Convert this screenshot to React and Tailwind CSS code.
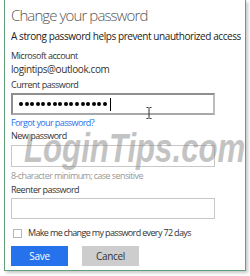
import React from 'react';

const font = { fontFamily: '"Open Sans", "Noto Sans", sans-serif' };

export default function App() {
  const dots = Array.from({ length: 16 });

  return (
    <div className="w-[250px] h-[276px] bg-white overflow-hidden" style={font}>
      <div className="ml-[4px] w-[242px] h-[271px] border border-t-0 border-[#62a07b] bg-white shadow-[2px_2px_3px_rgba(0,0,0,0.22)] overflow-hidden relative">
        <div className="pl-[6px] pt-[5px]">
          <h1 className="text-[15px] font-light leading-[20px] tracking-[-0.9px] text-[#555]">Change your password</h1>
          <div className="mt-[5px] w-[230px] overflow-hidden">
            <p className="text-[10px] leading-[13px] tracking-[-0.42px] text-[#222] whitespace-nowrap">A strong password helps prevent unauthorized access to your account.</p>
          </div>
          <p className="mt-[7px] text-[9px] leading-[12px] tracking-[-0.5px] text-[#333]">Microsoft account</p>
          <p className="mt-[1px] text-[10px] leading-[13px] tracking-[-0.4px] text-[#333]">logintips@outlook.com</p>
          <p className="mt-[3px] text-[9px] leading-[12px] tracking-[-0.5px] text-[#333]">Current password</p>
          <div className="mt-[2px] w-[204px] h-[22px] border-2 border-[#8e8e8e] border-r-[#bdbdbd] border-b-[#a8a8a8] flex items-center pl-[6px] gap-[1.6px]">
            {dots.map((_, i) => (
              <span key={i} className="w-[4px] h-[4px] rounded-full bg-black"></span>
            ))}
            <span className="ml-[1px] w-px h-[13px] bg-black"></span>
          </div>
          <p className="mt-[2px] text-[9px] leading-[12px] tracking-[-0.6px] text-[#2672ec]">Forgot your password?</p>
          <p className="mt-[1px] text-[9px] leading-[12px] tracking-[-0.5px] text-[#333]">New password</p>
          <div className="mt-[3px] w-[204px] h-[22px] border border-[#c8c8c8]"></div>
          <p className="mt-[3px] text-[9px] leading-[12px] tracking-[-0.6px] text-[#999]">8-character minimum; case sensitive</p>
          <p className="mt-[2px] text-[9px] leading-[12px] tracking-[-0.5px] text-[#333]">Reenter password</p>
          <div className="mt-[2px] w-[204px] h-[21px] border border-[#c8c8c8]"></div>
          <div className="mt-[9px] h-[10px] flex items-center pl-[2px]">
            <span className="w-[9px] h-[9px] border border-[#b5b5b5] bg-white"></span>
            <span className="ml-[6px] text-[9px] leading-[12px] tracking-[-0.65px] text-[#333]">Make me change my password every 72 days</span>
          </div>
          <div className="mt-[8px] flex gap-[14px]">
            <button className="w-[57px] h-[20px] bg-[#2672ec] text-white text-[10px] leading-none tracking-[-0.3px]">Save</button>
            <button className="w-[57px] h-[20px] bg-[#cdcdcd] text-[#333] text-[10px] leading-none tracking-[-0.3px]">Cancel</button>
          </div>
        </div>

        {/* I-beam mouse cursor */}
        <svg className="absolute left-[141px] top-[107px]" width="6" height="12" viewBox="0 0 6 12">
          <path d="M0.5 0.5h2M3.5 0.5h2M3 1v10M0.5 11.5h2M3.5 11.5h2" stroke="#333" strokeWidth="1" fill="none" />
        </svg>

        {/* watermark */}
        <div
          className="absolute left-[19px] top-[128px] text-[40px] font-bold italic leading-[40px] text-[#888]/50 whitespace-nowrap origin-left scale-x-[0.78] pointer-events-none"
          style={{ fontFamily: '"Liberation Sans", Arial, sans-serif' }}
        >
          LoginTips.com
        </div>
      </div>
    </div>
  );
}
